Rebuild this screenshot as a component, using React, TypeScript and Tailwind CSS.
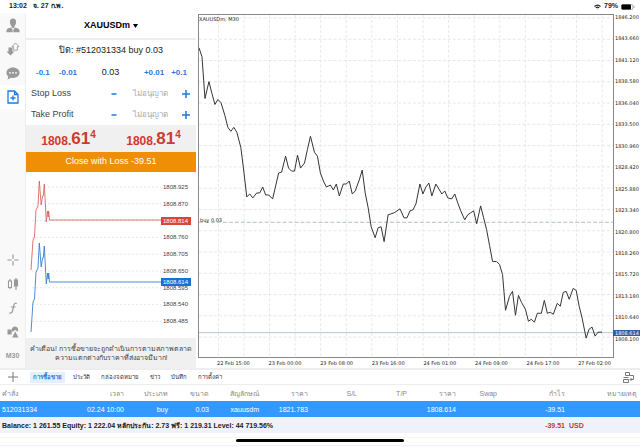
import { useState } from "react";
import type { ReactNode } from "react";

const priceLine =
  "198,47 201,56 204,98 208,81 211,93 214,104 217,99 220,102 224,115 227,127 230,131 233,127 236,132 240,147 243,171 246,197 249,194 252,198 256,193 259,193 262,187 265,195 268,195 272,199 275,186 278,173 281,172 285,156 288,168 291,171 294,171 297,155 300,168 304,163 307,149 310,136 314,152 317,156 320,173 323,181 326,187 330,185 333,190 336,184 339,196 343,184 346,184 349,181 352,194 355,191 359,180 362,170 365,193 368,208 371,227 375,238 378,228 381,227 384,242 388,215 391,214 394,213 397,211 400,209 404,218 407,218 410,211 413,210 416,204 420,184 423,194 426,187 429,183 432,196 436,184 439,189 442,194 445,191 448,198 452,199 455,194 458,203 461,211 465,220 468,215 471,213 474,211 477,224 481,206 484,218 487,230 490,246 493,262 497,262 500,265 503,275 506,311 510,297 513,292 516,316 519,296 522,303 526,310 529,322 532,320 535,323 538,314 542,314 545,301 548,314 551,313 554,315 558,304 561,307 564,293 567,292 570,300 574,289 577,291 580,307 583,319 587,339 590,330 593,328 596,337 599,333 603,333";

const tickLine =
  "31,270 33,240 34.5,237 36,210 38,206 39.3,181 41.2,205 42.5,196 43.3,196 44.3,184 46.3,222 47.5,211 48.2,217 48.7,211 49.5,220 161,220";

const priceLabels = [
  "1846.200", "1843.660", "1841.120", "1838.580", "1836.040", "1833.500", "1830.960", "1828.420",
  "1825.880", "1823.340", "1820.800", "1818.260", "1815.720", "1813.180", "1810.640", "1808.100",
];

const timeLabels = [
  "22 Feb 15:00", "23 Feb 00:00", "23 Feb 08:00", "23 Feb 16:00",
  "24 Feb 01:00", "24 Feb 09:00", "24 Feb 17:00", "27 Feb 02:00",
];

const tickLabels = [
  "1808.925", "1808.870", "1808.814", "1808.760", "1808.705", "1808.650", "1808.595", "1808.540", "1808.485",
];

const tabs = ["การซื้อขาย", "ประวัติ", "กล่องจดหมาย", "ข่าว", "บันทึก", "การตั้งค่า"];

const columns = [
  { label: "คำสั่ง", value: "512031334", className: "w-[60px] text-left" },
  { label: "เวลา", value: "02.24 10:00", className: "w-[67px] text-right" },
  { label: "ประเภท", value: "buy", className: "w-[44px] text-right" },
  { label: "ขนาด", value: "0.03", className: "w-[41px] text-right" },
  { label: "สัญลักษณ์", value: "xauusdm", className: "w-[50px] text-right" },
  { label: "ราคา", value: "1821.783", className: "w-[49px] text-right" },
  { label: "S/L", value: "", className: "w-[49px] text-right" },
  { label: "T/P", value: "", className: "w-[50px] text-right" },
  { label: "ราคา", value: "1808.614", className: "w-[49px] text-right" },
  { label: "Swap", value: "", className: "w-[41px] text-right" },
  { label: "กำไร", value: "-39.51", className: "w-[68px] text-right" },
  { label: "หมายเหตุ", value: "", className: "w-[72px] text-right" },
];

const StatusBar = () => (
  <header className="flex h-[13px] items-center justify-between pl-[9px] pr-[5px] text-[7px] font-bold text-[#222]">
    <div className="flex gap-[6px]">
      <span>13:02</span>
      <span>จ. 27 ก.พ.</span>
    </div>
    <div className="flex items-center gap-[3px]">
      <svg width="7" height="6" viewBox="0 0 14 11" fill="none" stroke="#222" strokeWidth="2.2">
        <path d="M1 4.5a9 9 0 0 1 12 0M3.6 7.2a5 5 0 0 1 6.8 0" />
        <circle cx="7" cy="9.3" r="0.9" fill="#222" stroke="none" />
      </svg>
      <span>79%</span>
      <svg width="14" height="6" viewBox="0 0 14 6">
        <rect x="0.5" y="0.5" width="11.5" height="5" rx="1.5" fill="none" stroke="#aaa" />
        <rect x="0.5" y="0.5" width="9.5" height="5" rx="0.8" fill="#000" />
        <path d="M13 2v2" stroke="#aaa" />
      </svg>
    </div>
  </header>
);

const ToolButton = ({ label, active, children }: { label: string; active?: boolean; children: ReactNode }) => (
  <button
    aria-label={label}
    className={`flex h-6 w-full items-center justify-center ${active ? "bg-white text-[#1f7ae0]" : "text-[#999]"}`}
  >
    {children}
  </button>
);

const Toolbar = () => (
  <nav className="flex w-[26px] shrink-0 flex-col justify-between border-r border-[#eee] bg-[#f9f9f9]">
    <div>
      <ToolButton label="Accounts">
        <svg width="14" height="15" viewBox="0 0 14 15" fill="currentColor">
          <path d="M7 0.5C4.8 0.5 3.8 2 3.9 4.2 4 6 4.8 7.3 5.5 8v1.3L7 10.6l1.5-1.3V8c.7-.7 1.5-2 1.6-3.8C10.2 2 9.2.5 7 .5z" />
          <path d="M4.9 9.5 2 10.6C.8 11 .4 12 .4 14.2h5.4L6.5 11.5zM9.1 9.5 12 10.6c1.2.4 1.6 1.4 1.6 3.6H8.2L7.5 11.5zM6.7 12h.7l.3 2.2H6.3z" />
        </svg>
      </ToolButton>
      <ToolButton label="Quotes">
        <svg width="14" height="14" viewBox="0 0 14 14">
          <path d="M2.5 5.5h4v4H8.5L4.5 13.5.5 9.5h2z" fill="currentColor" />
          <path d="M9.5 1 13 4.7h-1.7v3.5H7.7V4.7H6z" fill="#fff" stroke="currentColor" strokeWidth="0.9" />
        </svg>
      </ToolButton>
      <ToolButton label="Chat">
        <svg width="14" height="13" viewBox="0 0 14 13">
          <path d="M7 .5c3.7 0 6.6 2.3 6.6 5.3S10.7 11 7 11c-.7 0-1.3 0-1.9-.2L1.5 12.6l.8-3C1.1 8.6.4 7.3.4 5.8.4 2.8 3.3.5 7 .5z" fill="currentColor" />
          <g fill="#fff">
            <circle cx="4" cy="5.8" r="0.9" />
            <circle cx="7" cy="5.8" r="0.9" />
            <circle cx="10" cy="5.8" r="0.9" />
          </g>
        </svg>
      </ToolButton>
      <ToolButton label="New order" active>
        <svg width="12" height="14" viewBox="0 0 12 14" fill="none" stroke="currentColor" strokeWidth="1.3">
          <path d="M1 1h6.5L11 4.5V13H1zM7.5 1v3.5H11M6 5.5v5M3.5 8h5" />
        </svg>
      </ToolButton>
    </div>
    <div>
      <ToolButton label="Crosshair">
        <svg width="12" height="12" viewBox="0 0 12 12" stroke="currentColor" strokeWidth="1.2">
          <path d="M6 .5v4.3M6 7.2v4.3M.5 6h4.3M7.2 6h4.3" />
        </svg>
      </ToolButton>
      <ToolButton label="Chart type">
        <svg width="12" height="14" viewBox="0 0 12 14" stroke="currentColor" strokeWidth="1.1">
          <path d="M3 2v10M9 1v12" />
          <rect x="1.5" y="4" width="3" height="6.5" fill="#fff" />
          <rect x="7.5" y="3" width="3" height="6" fill="currentColor" />
        </svg>
      </ToolButton>
      <ToolButton label="Indicators">
        <svg width="10" height="12" viewBox="0 0 10 12" fill="none" stroke="currentColor" strokeWidth="1.2">
          <path d="M8.8 1.5C7.3.6 6.3 1.5 5.9 3.2L4.5 9c-.4 1.7-1.4 2.5-3.2 1.9M2.8 5h4.7" />
        </svg>
      </ToolButton>
      <ToolButton label="Objects">
        <svg width="12" height="12" viewBox="0 0 12 12" fill="currentColor">
          <path d="M.5 3.5h4.2v5H.5z" />
          <path d="M8 .5a3.2 3.2 0 0 1 2.5 5.2L8.2 3.8 5.8 6A3.2 3.2 0 0 1 8 .5zM8.2 5.5l3.3 6H5.2z" />
        </svg>
      </ToolButton>
      <ToolButton label="Timeframe">
        <span className="text-[7px] font-bold">M30</span>
      </ToolButton>
    </div>
  </nav>
);

const LevelRow = ({ id, label }: { id: string; label: string }) => (
  <div className="flex h-[21px] items-center pl-[5px] pr-[4px]">
    <label htmlFor={id} className="flex-1 text-[9px] text-[#444]">{label}</label>
    <button aria-label={`Decrease ${label}`} className="flex w-[12px] justify-center text-[#1f7ae0]">
      <svg width="6" height="8" viewBox="0 0 6 8" stroke="currentColor" strokeWidth="1.5">
        <path d="M0.5 4h5" />
      </svg>
    </button>
    <input
      id={id}
      placeholder="ไม่อนุญาต"
      className="w-[60px] bg-transparent text-center text-[8px] outline-none placeholder:text-[#aaa]"
    />
    <button aria-label={`Increase ${label}`} className="flex w-[12px] justify-center text-[#1f7ae0]">
      <svg width="8" height="8" viewBox="0 0 8 8" stroke="currentColor" strokeWidth="1.5">
        <path d="M4 0v8M0 4h8" />
      </svg>
    </button>
  </div>
);

const Quote = ({ small, big, sup }: { small: string; big: string; sup: string }) => (
  <div className="flex items-end justify-center font-bold text-[#d0392f]">
    <span className="text-[12px] leading-[14px]">{small}</span>
    <span className="text-[17px] leading-[18px]">{big}</span>
    <span className="self-start text-[10px] leading-[10px]">{sup}</span>
  </div>
);

const TickChart = () => (
  <div className="relative flex h-[166px] justify-end">
    <svg viewBox="26 172 170 166" preserveAspectRatio="none" className="absolute inset-0 h-full w-full" fill="none">
      {tickLabels.map((label, i) => (
        <path key={label} d={`M32 ${187 + i * 16.8}H161`} stroke="#ddd" strokeWidth="0.7" strokeDasharray="2 2" />
      ))}
      <polyline points={tickLine} stroke="#d9665e" strokeWidth="0.9" />
      <polyline points={tickLine} transform="translate(0 62)" stroke="#3a7fd0" strokeWidth="0.9" />
    </svg>
    <div className="relative flex w-[35px] flex-col justify-between pb-[13px] pt-[11px] text-[6px] leading-[8px] text-[#444]">
      {tickLabels.map((label) => (
        <span
          key={label}
          className={label === "1808.814" ? "mr-[5px] bg-[#d9453c] pl-[2px] text-white" : "pl-[2px]"}
        >
          {label}
        </span>
      ))}
      <span className="absolute left-0 right-[5px] top-[106px] bg-[#1f6fd0] pl-[2px] text-white">1808.614</span>
    </div>
  </div>
);

const OrderPanel = () => (
  <section className="w-[170px] shrink-0">
    <div className="flex h-[27px] items-center justify-center gap-[3px] border-b-2 border-[#eee]">
      <select
        aria-label="Symbol"
        className="appearance-none bg-transparent text-[9px] font-bold text-black outline-none [field-sizing:content]"
      >
        <option>XAUUSDm</option>
      </select>
      <svg width="5" height="4" viewBox="0 0 5 4"><path d="M0 0h5L2.5 4z" /></svg>
    </div>
    <h1 className="flex h-[22px] items-center justify-center text-[9px] text-[#222]">ปิด: #512031334 buy 0.03</h1>
    <div className="flex h-[21px] items-center justify-between pl-[10px] pr-[9px] text-[8px] font-bold text-[#1f7ae0]">
      <div className="flex gap-[9px]">
        <button>-0.1</button>
        <button>-0.01</button>
      </div>
      <input
        aria-label="Volume"
        defaultValue="0.03"
        className="w-[30px] bg-transparent text-center text-[9px] font-normal text-[#222] outline-none"
      />
      <div className="flex gap-[7px]">
        <button>+0.01</button>
        <button>+0.1</button>
      </div>
    </div>
    <LevelRow id="stop-loss" label="Stop Loss" />
    <LevelRow id="take-profit" label="Take Profit" />
    <div className="grid h-[27px] grid-cols-2 items-center bg-[#f0f0f0]">
      <Quote small="1808." big="61" sup="4" />
      <Quote small="1808." big="81" sup="4" />
    </div>
    <button className="block h-[20px] w-full bg-[#ee8f05] text-[9px] text-white">Close with Loss -39.51</button>
    <TickChart />
    <p className="flex h-[30px] items-center justify-center bg-[#f0f0f0] px-[4px] text-center text-[7px] leading-[9px] text-[#444]">
      คำเตือน! การซื้อขายจะถูกดำเนินการตามสภาพตลาด
      <br />
      ความแตกต่างกับราคาที่ส่งอาจมีมาก!
    </p>
  </section>
);

const PriceChart = () => (
  <section className="ml-[2px] flex min-w-0 flex-1 flex-col pt-px font-['DejaVu_Sans',sans-serif] text-[5px] leading-[6px] text-[#222]">
    <div className="flex flex-1">
      <div className="relative flex-1 border border-[#888]">
        <svg viewBox="198 14 416 344" preserveAspectRatio="none" className="absolute inset-0 h-full w-full" fill="none">
          <g stroke="#e2e2e2" strokeWidth="0.8" strokeDasharray="3 2">
            {priceLabels.map((label, i) => (
              <path key={label} d={`M198 ${17 + i * 21.4}H614`} />
            ))}
            {Array.from({ length: 16 }, (_, i) => (
              <path key={i} d={`M${217.5 + i * 25.7} 14V358`} />
            ))}
          </g>
          <path d="M198 222.5H614" stroke="#a9c9ab" strokeDasharray="4 2" />
          <path d="M198 333.5H614" stroke="#b9c5d2" />
          <polyline points={priceLine} stroke="#333" />
        </svg>
        <span className="absolute left-0 top-px">XAUUSDm, M30</span>
        <span className="absolute left-px top-[59%]">buy 0.03</span>
      </div>
      <div className="relative flex w-[26px] flex-col justify-between pb-[16px] pl-px">
        {priceLabels.map((label) => (
          <span key={label}>{label}</span>
        ))}
        <span className="absolute -left-px right-0 top-[92%] bg-[#2b5f9e] pl-[2px] text-white">1808.614</span>
      </div>
    </div>
    <div className="flex h-[10px] items-center justify-between pl-[19px] pr-[29px]">
      {timeLabels.map((label) => (
        <span key={label} className="whitespace-nowrap">{label}</span>
      ))}
    </div>
  </section>
);

const TradeTable = () => (
  <table className="w-full table-fixed border-collapse whitespace-nowrap text-[7px] leading-[9px]">
    <thead>
      <tr className="h-[16px] text-[#888]">
        {columns.map((column, i) => (
          <th key={i} className={`${column.className} ${i === 0 ? "pl-[2px]" : "pr-[3px]"} font-normal`}>
            {column.label}
          </th>
        ))}
      </tr>
    </thead>
    <tbody>
      <tr className="h-[16px] bg-[#3399ff] text-white">
        {columns.map((column, i) => (
          <td key={i} className={i === 0 ? "pl-[2px] text-left" : "pr-[3px] text-right"}>
            {column.value}
          </td>
        ))}
      </tr>
    </tbody>
    <tfoot>
      <tr className="h-[16px] bg-[#eef3fb] font-bold text-[#222]">
        <td colSpan={10} className="pl-[2px]">
          Balance: 1 261.55 Equity: 1 222.04 หลักประกัน: 2.73 ฟรี: 1 219.31 Level: 44 719.56%
        </td>
        <td className="pr-[3px] text-right text-[#d0342c]">-39.51</td>
        <td className="pl-px text-[#d0342c]">USD</td>
      </tr>
    </tfoot>
  </table>
);

const App = () => {
  const [activeTab, setActiveTab] = useState(tabs[0]);

  return (
    <div className="bg-white font-['Liberation_Sans',sans-serif]">
      <StatusBar />
      <main className="flex">
        <Toolbar />
        <OrderPanel />
        <PriceChart />
      </main>
      <div className="flex h-[17px] items-center justify-between border-b border-t-2 border-[#eee] pl-[8px] pr-[6px]">
        <div className="flex items-center">
          <button aria-label="Add" className="mr-[12px] text-[#777]">
            <svg width="10" height="10" viewBox="0 0 10 10" stroke="currentColor"><path d="M5 0v10M0 5h10" /></svg>
          </button>
          <div role="tablist" className="flex gap-[5px] text-[6px] leading-[11px]">
            {tabs.map((tab) => (
              <button
                key={tab}
                role="tab"
                aria-selected={tab === activeTab}
                onClick={() => setActiveTab(tab)}
                className={`px-[3px] ${tab === activeTab ? "bg-[#e3f0ff] font-bold text-[#1f7ae0]" : "text-[#333]"}`}
              >
                {tab}
              </button>
            ))}
          </div>
        </div>
        <button aria-label="Layout" className="text-[#777]">
          <svg width="11" height="11" viewBox="0 0 11 11" fill="none" stroke="currentColor">
            <path d="M2.5 .5h4v3h-4zM.5 7.5h5v3h-5zM.5 5.5h5M6.5 3.5h4v4h-3M8.5 6 7 7.5 8.5 9" />
          </svg>
        </button>
      </div>
      <TradeTable />
      <footer className="flex h-[13px] flex-col items-center border-b border-[#f2f2f2] pt-[4px]">
        <div className="w-full border-t border-[#f4f4ee]" />
        <div className="mt-px h-[3px] w-[168px] rounded-full bg-black" />
      </footer>
    </div>
  );
};

export default App;
